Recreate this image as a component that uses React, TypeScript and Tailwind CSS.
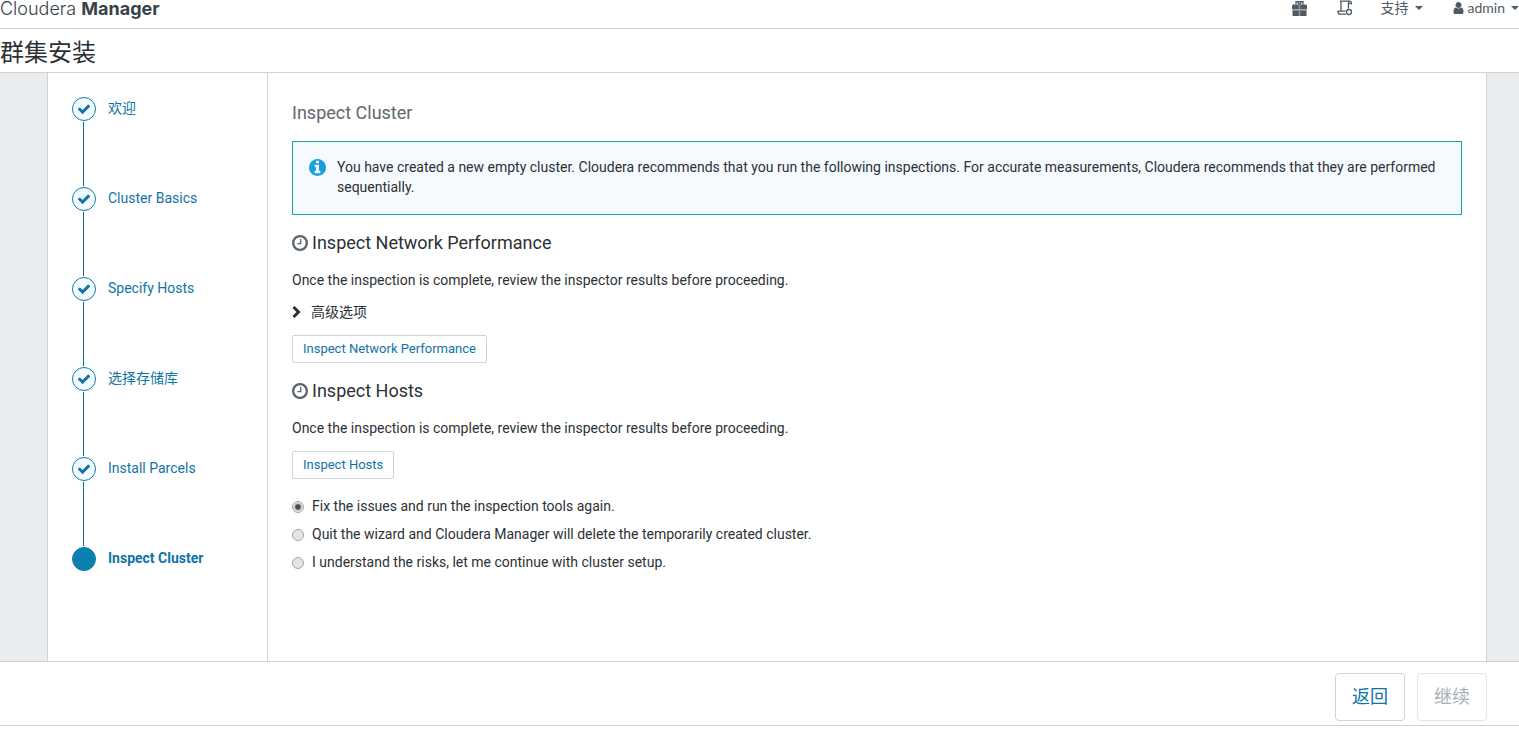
import { useState } from 'react';
import clsx from 'clsx';

const steps = ['欢迎', 'Cluster Basics', 'Specify Hosts', '选择存储库', 'Install Parcels', 'Inspect Cluster'];
const currentStep = 5;

const choices = [
    { value: 'fix', label: 'Fix the issues and run the inspection tools again.' },
    { value: 'quit', label: 'Quit the wizard and Cloudera Manager will delete the temporarily created cluster.' },
    { value: 'continue', label: 'I understand the risks, let me continue with cluster setup.' },
];

const icons = {
    check: 'M1671 566q0 40-28 68l-724 724-136 136q-28 28-68 28t-68-28l-136-136-362-362q-28-28-28-68t28-68l136-136q28-28 68-28t68 28l294 295 656-657q28-28 68-28t68 28l136 136q28 28 28 68z',
    clock: 'M1024 544v448q0 14-9 23t-23 9h-320q-14 0-23-9t-9-23v-64q0-14 9-23t23-9h224v-352q0-14 9-23t23-9h64q14 0 23 9t9 23zm416 352q0-148-73-273t-198-198-273-73-273 73-198 198-73 273 73 273 198 198 273 73 273-73 198-198 73-273zm224 0q0 209-103 385.5t-279.5 279.5-385.5 103-385.5-103-279.5-279.5-103-385.5 103-385.5 279.5-279.5 385.5-103 385.5 103 279.5 279.5 103 385.5z',
    info: 'M1152 1376v-160q0-14-9-23t-23-9h-96v-512q0-14-9-23t-23-9h-320q-14 0-23 9t-9 23v160q0 14 9 23t23 9h96v320h-96q-14 0-23 9t-9 23v160q0 14 9 23t23 9h448q14 0 23-9t9-23zm-128-896v-160q0-14-9-23t-23-9h-192q-14 0-23 9t-9 23v160q0 14 9 23t23 9h192q14 0 23-9t9-23zm640 416q0 209-103 385.5t-279.5 279.5-385.5 103-385.5-103-279.5-279.5-103-385.5 103-385.5 279.5-279.5 385.5-103 385.5 103 279.5 279.5 103 385.5z',
    user: 'M1536 1399q0 109-62.5 187t-150.5 78h-854q-88 0-150.5-78t-62.5-187q0-85 8.5-160.5t31.5-152 58.5-131 94-89 134.5-34.5q131 128 313 128t313-128q76 0 134.5 34.5t94 89 58.5 131 31.5 152 8.5 160.5zm-256-887q0 159-112.5 271.5t-271.5 112.5-271.5-112.5-112.5-271.5 112.5-271.5 271.5-112.5 271.5 112.5 112.5 271.5z',
};

function Icon({ name, viewBox = '0 0 1792 1792', className }: { name: keyof typeof icons; viewBox?: string; className?: string }) {
    return (
        <svg className={clsx('shrink-0', className)} viewBox={viewBox} fill="currentColor" aria-hidden="true">
            <path d={icons[name]} />
        </svg>
    );
}

function Caret() {
    return (
        <svg className="w-2 h-1 shrink-0" viewBox="0 0 8 4" fill="currentColor" aria-hidden="true">
            <path d="M0 0h8L4 4z" />
        </svg>
    );
}

function Header() {
    return (
        <header className="flex items-start justify-between h-[29px] border-b border-[#cfd3d6] text-[#4f5a62]">
            <a href="#home" className="font-['Inter','Noto_Sans_CJK_SC',sans-serif] text-lg leading-[18px] text-[#36424a]">
                <span className="font-light">Cloudera</span> <span className="font-bold">Manager</span>
            </a>
            <nav className="flex items-center h-4 font-['Lato','Noto_Sans_CJK_SC',sans-serif] text-sm">
                <button type="button" aria-label="Parcels" className="mr-[30px]">
                    <svg className="w-[15px] h-4" viewBox="0 0 15 16" fill="currentColor">
                        <path d="M1 4.500h5.900v5H0V5.500zM8.100 4.500H14l1 1v4H8.100zM.5 10.300h6.400V16H.5zM8.100 10.300h6.400V16H8.100z" />
                        <path d="M6.900 4.500h1.200V16H6.900z" opacity=".6" />
                        <path d="M7.500 4.500 5.200 1.600H4v3M7.500 4.500l2.300-2.900H11v3M5.200 1.600h4.600" fill="none" stroke="currentColor" strokeWidth="1.300" />
                    </svg>
                </button>
                <button type="button" aria-label="Running commands" className="mr-7">
                    <svg className="w-4 h-4" viewBox="0 0 16 16" fill="none" stroke="currentColor" strokeWidth="1.300">
                        <path d="M4 11V3.200C4 1.800 3.600 1.200 2.800 1.200h9.600c-.8.400-1 1-1 2.200V8.500M12.400 1.200c1.400 0 2.100.8 2.100 2.400h-3M8.500 11.200H1c0 2 .6 3 2 3h6" />
                        <circle cx="12" cy="12" r="2.500" />
                    </svg>
                </button>
                <button type="button" className="flex items-center gap-1.5 mr-[30px]">
                    支持 <Caret />
                </button>
                <button type="button" className="flex items-center gap-1">
                    <Icon name="user" viewBox="256 128 1280 1536" className="w-[11px] h-3" />
                    <span className="mr-0.5">admin</span> <Caret />
                </button>
            </nav>
        </header>
    );
}

function Steps() {
    return (
        <nav className="w-[220px] shrink-0 border-r border-[#cfd3d6] p-6" aria-label="群集安装">
            <ol>
                {steps.map((step, i) => (
                    <li key={step} className="flex gap-3 text-[#0f74a5]">
                        <div className="flex flex-col items-center w-6">
                            <span
                                className={clsx(
                                    'flex items-center justify-center w-6 h-6 rounded-full border border-[#0b7fad]',
                                    i === currentStep ? 'bg-[#0b7fad]' : 'bg-[#f3fbff]'
                                )}
                            >
                                {i < currentStep && <Icon name="check" className="w-3.5 h-3.5" />}
                            </span>
                            {i < steps.length - 1 && <span className="w-px h-16 my-px mr-px bg-[#14648a]" />}
                        </div>
                        <a href={`#step-${i + 1}`} className={clsx('h-6 leading-[22px]', i === currentStep && 'font-bold')}>
                            {step}
                        </a>
                    </li>
                ))}
            </ol>
        </nav>
    );
}

function InspectionTitle({ children }: { children: string }) {
    return (
        <h3 className="flex items-center gap-1 mt-4 text-lg leading-6">
            <Icon name="clock" viewBox="128 128 1536 1536" className="w-4 h-4 text-[#5a656d]" />
            {children}
        </h3>
    );
}

function ActionButton({ children }: { children: string }) {
    return (
        <button type="button" className="block mt-3 h-7 px-2.5 border border-[#ced4d9] rounded-xs bg-white text-[13px] leading-[26px] text-[#0f74a5]">
            {children}
        </button>
    );
}

export default function App() {
    const [choice, setChoice] = useState('fix');
    const [advanced, setAdvanced] = useState(false);

    return (
        <div className="min-h-screen flex flex-col pb-1.5 bg-white font-['Roboto','Noto_Sans_CJK_SC',sans-serif] text-sm text-[#2b3136]">
            <Header />
            <h1 className="h-11 border-b border-[#cfd3d6] text-2xl leading-12">群集安装</h1>

            <div className="flex-1 flex pl-[47px] pr-8 bg-[#e9edf0]">
                <div className="flex-1 flex bg-white border-x border-[#cfd3d6]">
                    <Steps />
                    <main className="flex-1 p-6">
                        <h2 className="mb-3 text-lg leading-8 text-[#5f686f]">Inspect Cluster</h2>
                        <div className="flex gap-[11px] pt-[15px] pb-[17px] px-4 border border-[#16a3a5] bg-[#f5fafe]">
                            <Icon name="info" viewBox="128 128 1536 1536" className="w-[17px] h-[17px] mt-0.5 text-[#1a9fdb]" />
                            <p className="leading-5">
                                You have created a new empty cluster. Cloudera recommends that you run the following inspections. For accurate
                                measurements, Cloudera recommends that they are performed sequentially.
                            </p>
                        </div>

                        <InspectionTitle>Inspect Network Performance</InspectionTitle>
                        <p className="mt-[15px] leading-5">Once the inspection is complete, review the inspector results before proceeding.</p>
                        <button
                            type="button"
                            aria-expanded={advanced}
                            onClick={() => setAdvanced(!advanced)}
                            className="flex items-center gap-2.5 mt-3 mb-[13px] leading-5"
                        >
                            <svg className="w-[9px] h-3" viewBox="0 0 9 12" fill="none" stroke="currentColor" strokeWidth="3" aria-hidden="true">
                                <path d="M1.500 1l5 5-5 5" />
                            </svg>
                            高级选项
                        </button>
                        <ActionButton>Inspect Network Performance</ActionButton>

                        <InspectionTitle>Inspect Hosts</InspectionTitle>
                        <p className="mt-[15px] mb-[13px] leading-5">Once the inspection is complete, review the inspector results before proceeding.</p>
                        <ActionButton>Inspect Hosts</ActionButton>

                        <div className="mt-3.5">
                            {choices.map((c) => (
                                <label key={c.value} className="flex items-center gap-2 h-7 leading-5">
                                    <input
                                        type="radio"
                                        name="choice"
                                        value={c.value}
                                        checked={choice === c.value}
                                        onChange={() => setChoice(c.value)}
                                        className="appearance-none w-3 h-3 rounded-full border border-[#a6a6a6] bg-[#e4e4e4] checked:bg-[radial-gradient(circle,#4a4a4a_2px,#e4e4e4_4px)]"
                                    />
                                    <span className="pb-0.5">{c.label}</span>
                                </label>
                            ))}
                        </div>
                    </main>
                </div>
            </div>

            <footer className="flex justify-end gap-3 pt-[11px] pb-1 pr-8 border-y border-[#cfd3d6] text-lg">
                <button type="button" className="h-12 px-4 border border-[#ced4d9] rounded-sm text-[#0f74a5]">
                    返回
                </button>
                <button type="button" disabled className="h-12 px-4 border border-[#e3e6e8] rounded-sm text-[#a9b0b5]">
                    继续
                </button>
            </footer>
        </div>
    );
}
